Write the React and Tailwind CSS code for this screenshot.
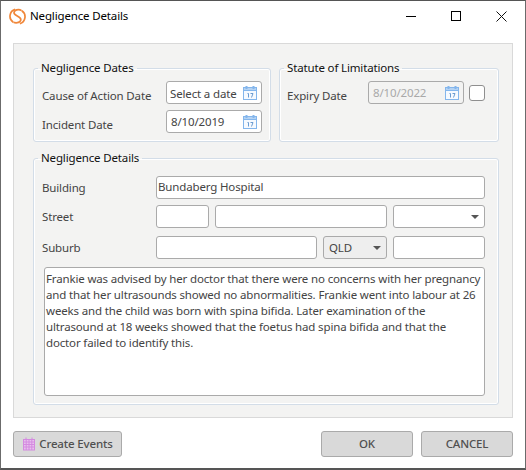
const font = { fontFamily: '"Noto Sans", "Open Sans", sans-serif', fontSize: "11.5px", letterSpacing: "-0.15px" };

function CalendarIcon() {
  return (
    <svg width="14" height="14" viewBox="0 0 14 14" className="shrink-0">
      <rect x="0.5" y="1.5" width="13" height="12" fill="#f6faff" stroke="#84b6ec" />
      <rect x="0.5" y="1.5" width="13" height="3" fill="#b4d3f4" stroke="#84b6ec" />
      <rect x="2.5" y="0" width="2" height="3" fill="#84b6ec" />
      <rect x="9.5" y="0" width="2" height="3" fill="#84b6ec" />
      <path d="M4.5 7.5h1v4M7.5 7.5h2.5l-1.5 4" fill="none" stroke="#6a9bd0" strokeWidth="1" />
    </svg>
  );
}

function DateBox({ value, dim, textClass = "" }) {
  return (
    <div className={`flex h-[23px] w-[96px] items-center justify-between rounded-[3px] border border-[#aaaaaa] pl-[3px] pr-[4px] ${dim ? "bg-[#f3f3f2] text-[#a9a9a9]" : "bg-white text-[#444444]"}`}>
      <span className={`leading-[16px] ${textClass}`}>{value}</span>
      <CalendarIcon />
    </div>
  );
}

function Caret() {
  return <span className="h-0 w-0 border-x-[4px] border-t-[4px] border-x-transparent border-t-[#555555]" />;
}

function Input({ className = "" }) {
  return <div className={`h-[23px] rounded-[3px] border border-[#aaaaaa] bg-white ${className}`} />;
}

function Legend({ children, className = "" }) {
  return <legend className={`px-[3px] leading-[16px] text-[#111111] ${className}`}>{children}</legend>;
}

function Label({ children, className = "" }) {
  return <span className={`leading-[16px] text-[#444444] ${className}`}>{children}</span>;
}

function Button({ children, className = "" }) {
  return (
    <button className={`flex h-[26px] items-center justify-center rounded-[3px] border border-[#aaaaaa] bg-[#d9d9d9] font-medium leading-[16px] text-[#505050] ${className}`}>
      {children}
    </button>
  );
}

export default function App() {
  return (
    <div style={font} className="flex h-[470px] w-[526px] flex-col border-x border-b-2 border-t border-x-[#6b6b6b] border-b-[#555555] border-t-[#555555] bg-white">
      <div className="flex h-[30px] shrink-0 items-center pl-[8px]">
        <svg width="17" height="17" viewBox="0 0 17 17" fill="none" stroke="#f0873a" strokeWidth="1.7">
          <path d="M6.2 1.4A7.2 7.2 0 0 0 4.2 14.3" />
          <path d="M10.8 15.6A7.2 7.2 0 0 0 12.8 2.7" />
          <path d="M12.6 2.6C9.5 .6 5.2 2 5 4.8c-.2 3 6.6 3.4 6.8 6.6.2 2.8-4 4.2-7.4 2.9" />
        </svg>
        <span className="ml-[4px] leading-[16px] text-black">Negligence Details</span>
        <div className="ml-auto flex items-center pr-[18px]">
          <span className="h-px w-[10px] bg-black" />
          <span className="ml-[35px] h-[10px] w-[10px] border border-black" />
          <svg width="11" height="11" viewBox="0 0 11 11" className="ml-[35px]" stroke="#111111" strokeWidth="1">
            <path d="M.5.5l10 10M10.5.5l-10 10" />
          </svg>
        </div>
      </div>

      <div className="mx-[12px] mt-[12px] flex h-[375px] flex-col gap-[8px] border border-[#d9d9d9] bg-[#f3f3f2] pl-[19px] pr-[13px] pt-[16px]">
        <div className="flex gap-[8px]">
          <fieldset className="h-[82px] w-[238px] rounded-[3px] border border-[#d3dde8] pl-[8px] pr-[8px] shadow-[inset_0_0_0_1px_#ffffff]">
            <Legend className="-ml-[4px]">Negligence Dates</Legend>
            <div className="mt-[5px] flex flex-col gap-[6px]">
              <div className="flex items-center justify-between">
                <Label className="pt-[6px]">Cause of Action Date</Label>
                <DateBox value="Select a date" textClass="pt-[3px]" />
              </div>
              <div className="flex items-center justify-between">
                <Label className="pt-[7px]">Incident Date</Label>
                <DateBox value="8/10/2019" textClass="pt-[1px] pl-[1px]" />
              </div>
            </div>
          </fieldset>
          <fieldset className="h-[82px] w-[220px] rounded-[3px] border border-[#d3dde8] pl-[7px] pr-[13px] shadow-[inset_0_0_0_1px_#ffffff]">
            <Legend className="-ml-[3px]">Statute of Limitations</Legend>
            <div className="mt-[5px] flex items-center">
              <Label className="pt-[6px]">Expiry Date</Label>
              <div className="ml-auto flex items-center gap-[5px]">
                <DateBox value="8/10/2022" dim textClass="pt-[1px] pl-[1px]" />
                <span className="h-[16px] w-[16px] rounded-[3px] border border-[#8f8f8f] bg-white" />
              </div>
            </div>
          </fieldset>
        </div>

        <fieldset className="h-[255px] rounded-[3px] border border-[#d3dde8] pl-[8px] pr-[13px] shadow-[inset_0_0_0_1px_#ffffff]">
          <Legend className="-ml-[4px]">Negligence Details</Legend>
          <div className="mt-[10px] flex flex-col">
            <div className="flex items-center">
              <Label className="w-[114px]">Building</Label>
              <div className="flex h-[23px] w-[329px] items-center rounded-[3px] border border-[#aaaaaa] bg-white pb-[2px] pl-[1px] leading-[16px] text-[#444444]">
                Bundaberg Hospital
              </div>
            </div>
            <div className="mt-[6px] flex items-center">
              <Label className="w-[114px]">Street</Label>
              <Input className="w-[53px]" />
              <Input className="ml-[6px] w-[172px]" />
              <div className="ml-[6px] flex h-[23px] w-[92px] items-center justify-end rounded-[3px] border border-[#aaaaaa] bg-white pr-[5px]">
                <Caret />
              </div>
            </div>
            <div className="mt-[8px] flex items-center">
              <Label className="w-[114px]">Suburb</Label>
              <Input className="w-[161px]" />
              <div className="ml-[6px] flex h-[23px] w-[64px] items-center justify-between rounded-[3px] border border-[#aaaaaa] bg-[#eeeeee] pl-[5px] pr-[5px] leading-[16px] text-[#444444]">
                <span>QLD</span>
                <Caret />
              </div>
              <Input className="ml-[6px] w-[92px]" />
            </div>
            <div className="ml-[2px] mt-[8px] h-[129px] w-[441px] rounded-[3px] border border-[#aaaaaa] bg-white px-[1px] pt-[3px] leading-[16px] text-[#444444]">
              Frankie was advised by her doctor that there were no concerns with her pregnancy and that her ultrasounds showed no abnormalities. Frankie went into labour at 26 weeks and the child was born with spina bifida. Later examination of the ultrasound at 18 weeks showed that the foetus had spina bifida and that the doctor failed to identify this.
            </div>
          </div>
        </fieldset>
      </div>

      <div className="mx-[12px] mt-[13px] flex items-start">
        <Button className="w-[109px] gap-[3px]">
          <svg width="14" height="14" viewBox="0 0 14 14" fill="#e8c0ee" stroke="#d48ae0" strokeWidth="1">
            <rect x="1.5" y="2.5" width="11" height="10.5" />
            <path d="M1.5 5h11M1.5 7.5h11M1.5 10h11M4.2 2.5V13M7 2.5V13M9.8 2.5V13" fill="none" />
            <path d="M4 .5v2M10 .5v2" fill="none" />
          </svg>
          Create Events
        </Button>
        <Button className="ml-auto w-[92px]">OK</Button>
        <Button className="ml-[8px] w-[92px]">CANCEL</Button>
      </div>
    </div>
  );
}
